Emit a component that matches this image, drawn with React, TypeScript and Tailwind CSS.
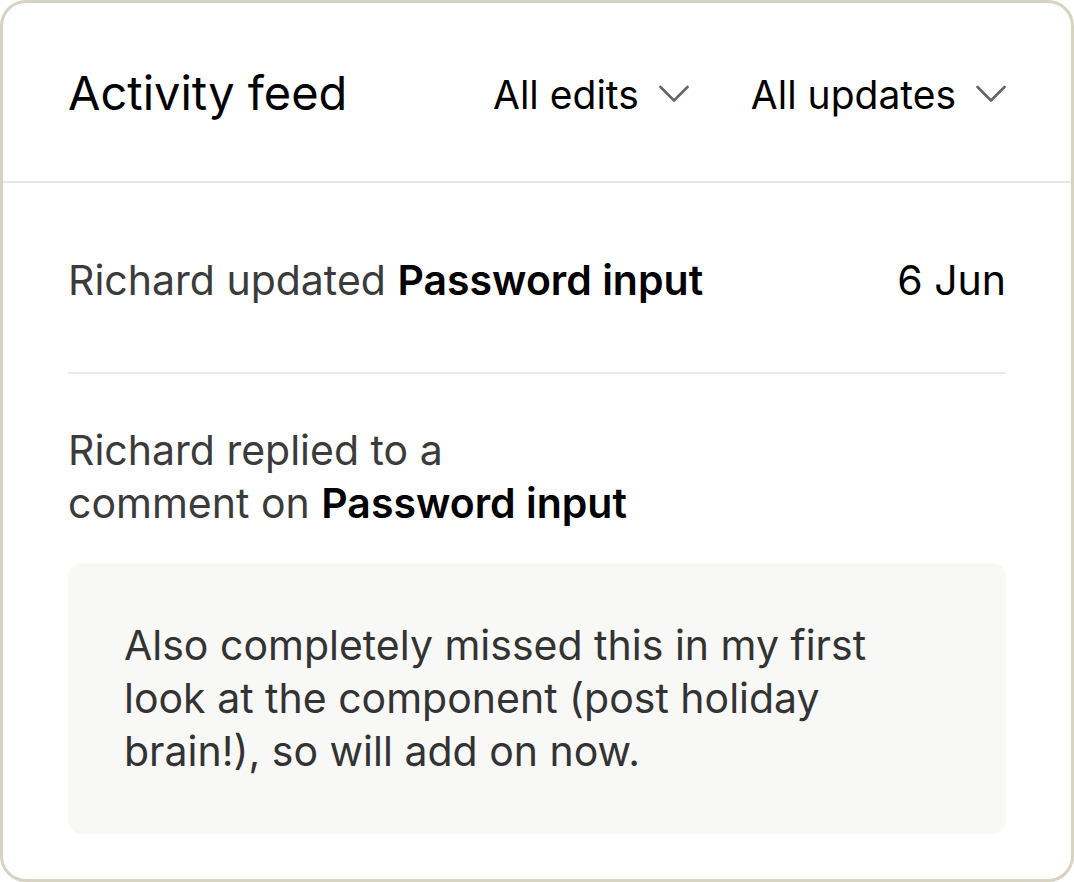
function Chevron() {
  return (
    <svg width="30" height="18" viewBox="0 0 30 18" fill="none" className="text-[#666666]">
      <polyline points="1.5,2 15,15.5 28.5,2" stroke="currentColor" strokeWidth="2.6" strokeLinecap="round" strokeLinejoin="round" />
    </svg>
  );
}

function Filter({ label }: { label: string }) {
  return (
    <button className="flex items-center gap-[20px] text-[39px] leading-none text-black">
      {label}
      <Chevron />
    </button>
  );
}

export default function App() {
  return (
    <div className="h-[882px] w-[1074px] bg-white font-['Inter',sans-serif]">
      <div className="flex h-full flex-col overflow-hidden rounded-[26px] border-[3px] border-[#d7d2c2] bg-white">
        {/* Header */}
        <div className="flex h-[180px] items-center justify-between border-b-2 border-[#e6e6e6] px-[65px]">
          <h1 className="text-[47px] leading-none text-black">Activity feed</h1>
          <div className="flex items-center gap-[62px] pt-[4px]">
            <Filter label="All edits" />
            <Filter label="All updates" />
          </div>
        </div>

        <div className="px-[65px]">
          {/* Row 1 */}
          <div className="flex items-center justify-between border-b-2 border-[#ebebeb] pb-[65px] pt-[71px] text-[41px] leading-[53px]">
            <p className="text-[#3b3b3b]">
              Richard updated <span className="font-semibold text-black">Password input</span>
            </p>
            <span className="text-black">6 Jun</span>
          </div>

          {/* Row 2 */}
          <div className="pt-[50px] text-[41px] leading-[53px]">
            <p className="text-[#3b3b3b]">
              Richard replied to a
              <br />
              comment on <span className="font-semibold text-black">Password input</span>
            </p>
            <div className="mt-[33px] rounded-[14px] bg-[#f8f8f6] p-[56px] text-[#333333]">
              Also completely missed this in my first look at the component (post holiday brain!), so
              will add on now.
            </div>
          </div>
        </div>
      </div>
    </div>
  );
}
